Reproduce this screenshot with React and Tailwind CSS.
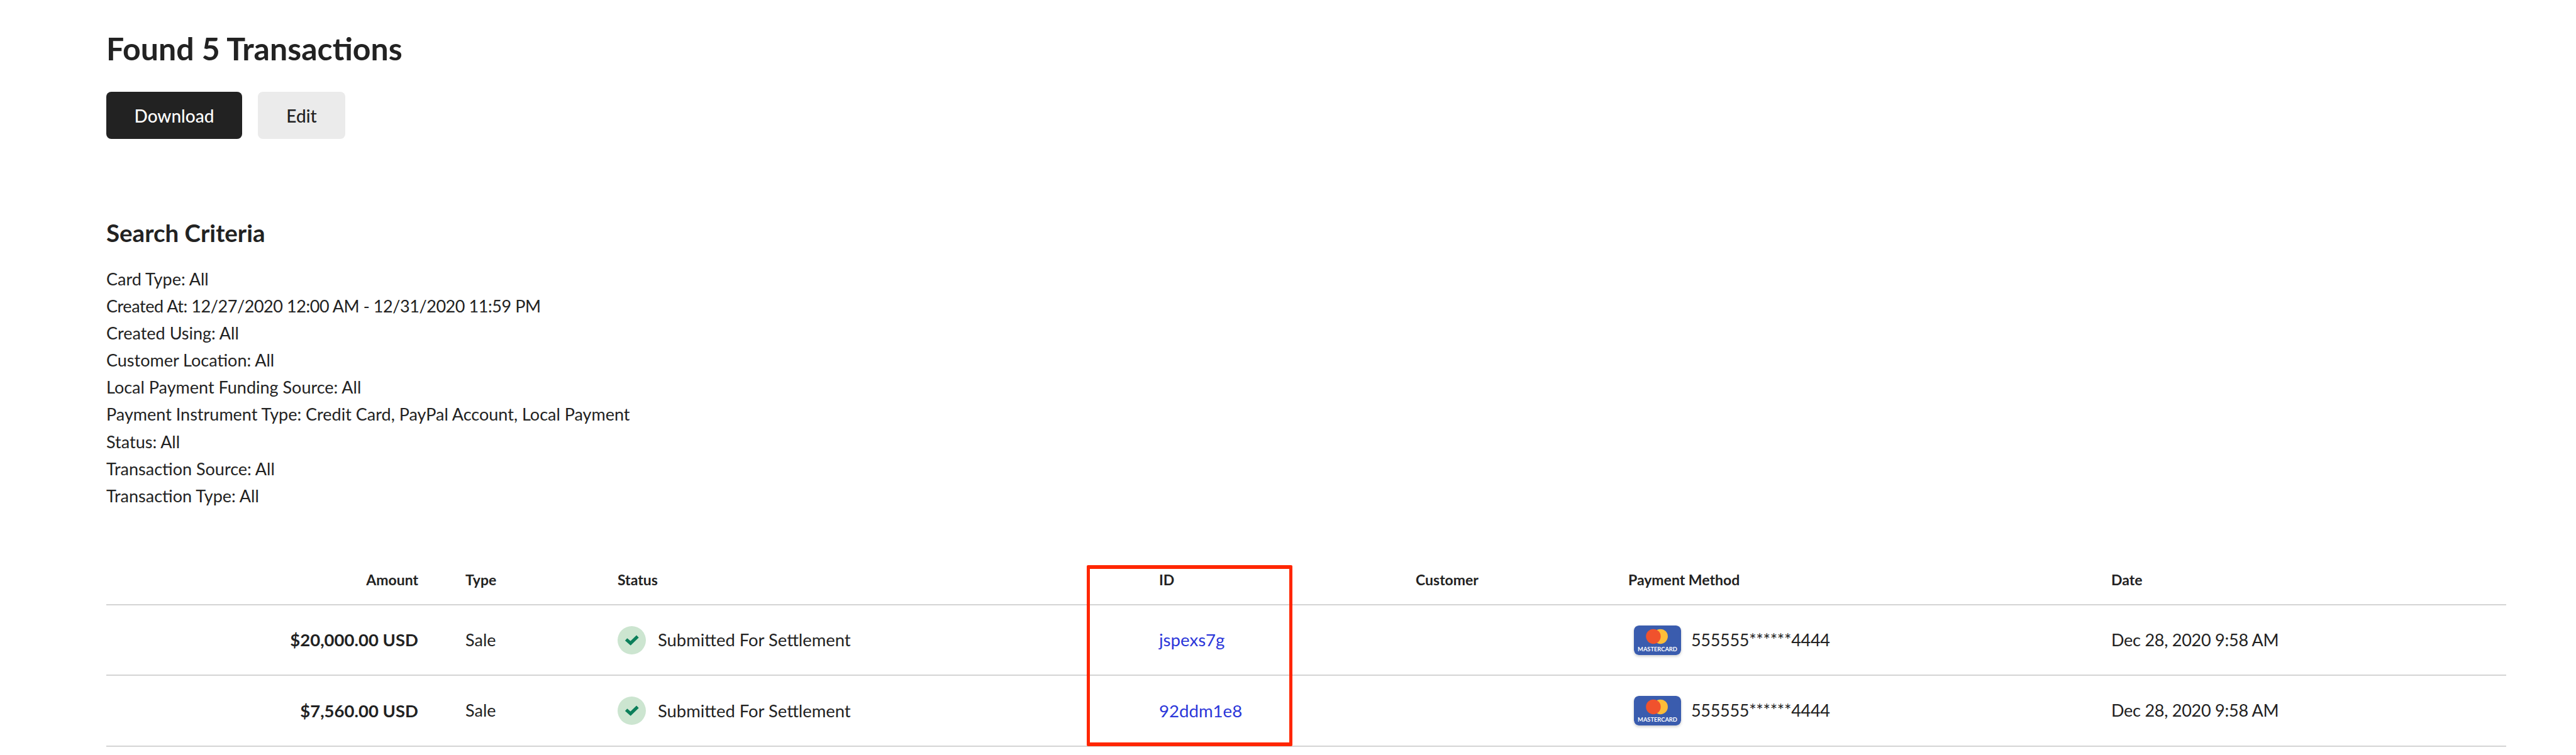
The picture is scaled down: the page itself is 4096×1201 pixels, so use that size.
const criteria = [
  { text: 'Card Type: All' },
  { text: 'Created At: 12/27/2020 12:00 AM - 12/31/2020 11:59 PM', digits: true },
  { text: 'Created Using: All' },
  { text: 'Customer Location: All' },
  { text: 'Local Payment Funding Source: All' },
  { text: 'Payment Instrument Type: Credit Card, PayPal Account, Local Payment' },
  { text: 'Status: All' },
  { text: 'Transaction Source: All' },
  { text: 'Transaction Type: All' },
]

const rows = [
  { amount: '$20,000.00 USD', id: 'jspexs7g' },
  { amount: '$7,560.00 USD', id: '92ddm1e8' },
]

const cols = 'grid grid-cols-[571px_242px_861px_408px_338px_768px_1fr] items-center border-b-2 border-[#d4d4d4]'

function CheckBadge() {
  return (
    <svg width="45" height="45" viewBox="0 0 48 48" className="shrink-0">
      <circle cx="24" cy="24" r="24" fill="#cce5d0" />
      <path d="M14.5 22.5L22 29L34 17.5" fill="none" stroke="#0b7f5a" strokeWidth="5.5" />
    </svg>
  )
}

function MastercardLogo() {
  return (
    <svg width="75" height="47" viewBox="0 0 80 50" className="shrink-0 rounded-lg shadow-[0_2px_4px_rgba(0,0,0,0.2)]">
      <rect width="80" height="50" rx="8" fill="#3a5cae" />
      <circle cx="45" cy="18.5" r="12.5" fill="#fdbd39" />
      <circle cx="33" cy="18.5" r="12.5" fill="#f0522d" />
      <text x="40" y="44" textAnchor="middle" fontSize="9" fontWeight="700" fill="#fff" textLength="67" lengthAdjust="spacingAndGlyphs">MASTERCARD</text>
    </svg>
  )
}

export default function App() {
  return (
    <div className="bg-white text-[#222] font-[Lato,sans-serif] pl-[169px] pr-[111px] pt-[47px] h-screen overflow-hidden">
      <h1 className="text-[50px] leading-[60px] font-bold">Found 5 Transactions</h1>

      <div className="flex gap-[25px] mt-[39px]">
        <button className="w-[216px] h-[75px] bg-[#222] text-white rounded-lg text-[28px] font-medium">Download</button>
        <button className="w-[139px] h-[75px] bg-[#ebebeb] rounded-lg text-[28px] font-medium">Edit</button>
      </div>

      <h2 className="mt-[126px] text-[38.5px] leading-[46px] font-bold">Search Criteria</h2>
      <div className="mt-[29px] text-[27px] leading-[43.1px]">
        {criteria.map(c => (
          <div key={c.text} className={c.digits ? 'tracking-[-0.44px]' : ''}>{c.text}</div>
        ))}
      </div>

      <div className="relative mt-[74px]">
        <div className={`${cols} h-[79px] text-[23px] font-bold`}>
          <div className="text-right pr-[75px]">Amount</div>
          <div>Type</div>
          <div>Status</div>
          <div>ID</div>
          <div>Customer</div>
          <div>Payment Method</div>
          <div>Date</div>
        </div>
        {rows.map(r => (
          <div key={r.id} className={`${cols} h-[112.4px] text-[27px]`}>
            <div className="text-right pr-[75px] font-bold text-[27.5px]">{r.amount}</div>
            <div>Sale</div>
            <div className="flex items-center gap-[19px]"><CheckBadge /><span className="text-[27.4px]">Submitted For Settlement</span></div>
            <div><a className="text-[#2b36d9] text-[27.6px]">{r.id}</a></div>
            <div></div>
            <div className="flex items-center gap-[16px] pl-[9px]"><MastercardLogo /><span className="tracking-[-0.3px]">555555******4444</span></div>
            <div className="tracking-[-0.25px]">Dec 28, 2020 9:58 AM</div>
          </div>
        ))}
        <div className="absolute left-[1559px] top-[15px] w-[327px] h-[288px] border-x-[5px] border-y-[6px] border-[#ff2600] rounded-[2px]"></div>
      </div>
    </div>
  )
}
